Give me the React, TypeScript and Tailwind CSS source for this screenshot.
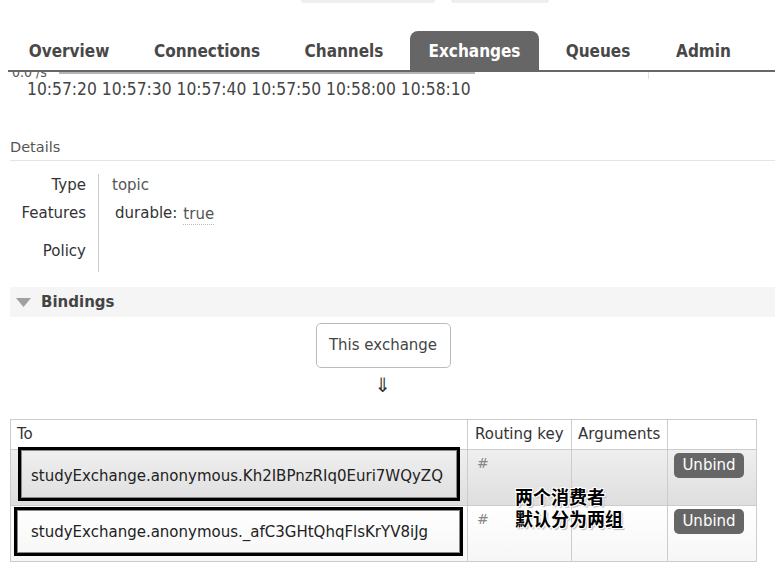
import React from "react";

const tabs = [
  { name: "Overview", w: "w-[118px]" },
  { name: "Connections", w: "w-[142px]" },
  { name: "Channels", w: "w-[116px]" },
  { name: "Exchanges", w: "w-[129px]", active: true },
  { name: "Queues", w: "w-[102px]" },
  { name: "Admin", w: "w-[93px]" },
];

const bindings = [
  { to: "studyExchange.anonymous.Kh2IBPnzRIq0Euri7WQyZQ", key: "#", odd: true },
  { to: "studyExchange.anonymous._afC3GHtQhqFlsKrYV8iJg", key: "#", odd: false },
];

const body = { fontFamily: '"DejaVu Sans", Verdana, sans-serif' };
const narrow = { fontFamily: '"DejaVu Sans Condensed", "Liberation Sans Narrow", Roboto, sans-serif' };

export default function App() {
  return (
    <div className="w-[775px] h-[572px] overflow-hidden bg-white text-[#444]" style={body}>
      {/* cut-off buttons at the very top */}
      <div className="flex h-[3px]">
        <div className="ml-[301px] w-[134px] h-[3px] bg-[#eeeeee] rounded-b-md" />
        <div className="ml-[16px] w-[98px] h-[3px] bg-[#eeeeee] rounded-b-md" />
      </div>

      {/* Tabs */}
      <div className="mt-[28px] ml-[8px] flex gap-[8px] pl-[2px] border-b-2 border-[#666]" style={narrow}>
        {tabs.map((t) => (
          <div
            key={t.name}
            className={`${t.w} h-[39px] pt-[3px] flex items-center justify-center text-[17px] font-bold rounded-t-lg ${t.active ? "bg-[#666] text-white" : "text-[#484848]"}`}
          >
            {t.name}
          </div>
        ))}
      </div>

      {/* chart remnants */}
      <div className="relative h-[7px] overflow-hidden">
        <span className="absolute left-[12px] top-[-10px] text-[14px] text-[#555]" style={narrow}>0.0 /s</span>
        <div className="absolute left-[59px] top-0 w-[416px] h-[2px] bg-[#b5b5b5]" />
        <div className="absolute left-[648px] top-0 w-px h-[8px] bg-[#e0e0e0]" />
      </div>
      <div className="pl-[27px] text-[17.3px] leading-[20px] text-[#444]" style={narrow}>
        10:57:20 10:57:30 10:57:40 10:57:50 10:58:00 10:58:10
      </div>

      {/* Details */}
      <div className="mt-[39px] ml-[10px] pb-[4px] border-b border-[#e4e4e4] text-[14.5px] text-[#555] leading-[18px]">
        Details
      </div>
      <div className="ml-[10px] mt-[13px] flex text-[15px]">
        <div className="w-[89px] border-r border-[#ccc] pr-[12px] text-right text-[#333] h-[98px]">
          <div className="h-[28px] leading-[22px]">Type</div>
          <div className="h-[38px] leading-[22px]">Features</div>
          <div className="leading-[22px]">Policy</div>
        </div>
        <div className="pl-[13px]">
          <div className="h-[28px] leading-[22px] text-[#555]">topic</div>
          <div className="h-[38px] leading-[22px] pl-[3px] flex items-end gap-[6px]">
            <span className="text-[#333] leading-[22px] self-start">durable:</span>
            <span className="text-[#555] leading-[20px] border-b border-dotted border-[#bbb] self-start mt-[2px]">true</span>
          </div>
        </div>
      </div>

      {/* Bindings header */}
      <div className="mt-[15px] ml-[10px] h-[30px] bg-[#f5f5f5] flex items-center">
        <svg width="15" height="9" viewBox="0 0 15 9" className="ml-[6px] mt-[1px]">
          <polygon points="0,0 15,0 7.5,9" fill="#a0a0a0" />
        </svg>
        <span className="ml-[10px] text-[15px] font-bold text-[#444]">Bindings</span>
      </div>

      {/* exchange box and arrow */}
      <div className="ml-[10px] w-[746px] flex flex-col items-center">
        <div className="mt-[6px] w-[135px] h-[45px] border border-[#bbb] rounded-[5px] flex items-center justify-center text-[15px] text-[#444]">
          This exchange
        </div>
        <div className="mt-[4px] h-[26px] text-[20px] leading-[26px] text-[#333]">⇓</div>
      </div>

      {/* Bindings table */}
      <div className="relative ml-[10px] mt-[21px] w-[747px]">
        <table className="w-full border-collapse text-[15px] text-[#333]">
          <thead>
            <tr className="h-[30px]">
              <th className="w-[457px] border border-[#ccc] text-left font-normal pl-[6px] align-middle">To</th>
              <th className="w-[104px] border border-[#ccc] text-left font-normal pl-[7px]">Routing key</th>
              <th className="w-[96px] border border-[#ccc] text-left font-normal pl-[6px]">Arguments</th>
              <th className="border border-[#ccc]" />
            </tr>
          </thead>
          <tbody>
            {bindings.map((b) => (
              <tr
                key={b.to}
                className={`h-[56px] ${b.odd ? "bg-linear-to-b from-[#efefef] to-[#dedede]" : "bg-linear-to-b from-[#ffffff] to-[#f6f6f6]"}`}
              >
                <td className="border border-[#ccc] pl-[20px] pb-[2px] align-middle text-[#222]">{b.to}</td>
                <td className="border border-[#ccc] pl-[9px] pt-[3px] align-top text-[#888] text-[14px]">{b.key}</td>
                <td className="border border-[#ccc]" />
                <td className="border border-[#ccc] align-top pt-[3px] pl-[6px]">
                  <button className="w-[70px] h-[25px] rounded-[5px] bg-[#666] text-white text-[15px] leading-[25px]">
                    Unbind
                  </button>
                </td>
              </tr>
            ))}
          </tbody>
        </table>

        {/* annotation boxes */}
        <div className="absolute left-[8px] top-[28px] w-[442px] h-[54px] border-[3px] border-black shadow-[inset_0_0_0_1px_#888]" />
        <div className="absolute left-[4px] top-[88px] w-[449px] h-[49px] border-[3px] border-black shadow-[inset_0_0_0_1px_#888]" />

        {/* annotation text */}
        <div
          className="absolute left-[505px] top-[66px] text-[18px] font-bold leading-[22px] text-black"
          style={{
            fontFamily: '"Noto Sans CJK SC", sans-serif',
            textShadow: "1px 1px 0 #fff, -1px -1px 0 #fff, 1px -1px 0 #fff, -1px 1px 0 #fff, 2px 2px 1px #bbb",
          }}
        >
          <div>两个消费者</div>
          <div>默认分为两组</div>
        </div>
      </div>
    </div>
  );
}
